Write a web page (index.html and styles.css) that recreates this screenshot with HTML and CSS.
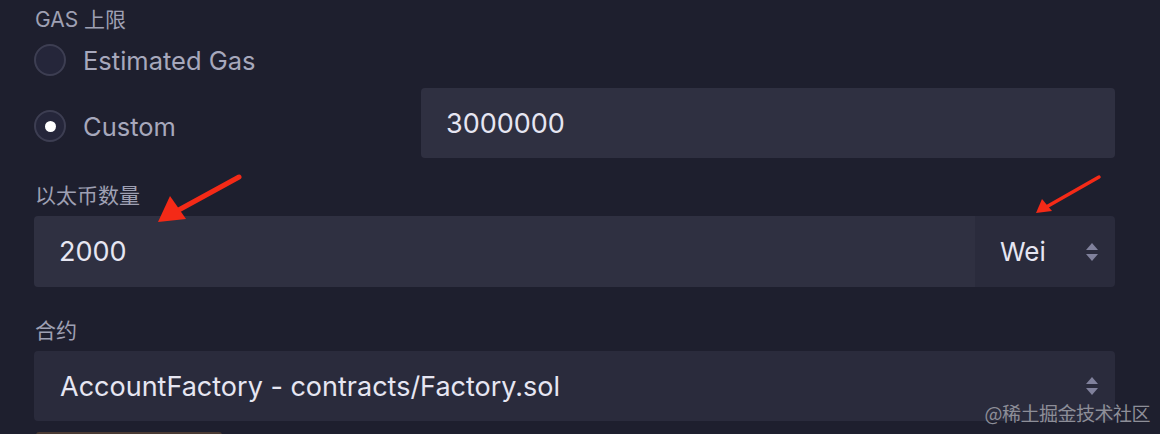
FILE: index.html
```html
<!DOCTYPE html>
<html lang="zh">
<head>
<meta charset="utf-8">
<title>Deploy</title>
<link rel="stylesheet" href="styles.css">
</head>
<body>
<div class="panel">
  <div class="label label-gas">GAS 上限</div>
  <div class="radio-row first">
    <span class="radio"></span>
    <span class="radio-text">Estimated Gas</span>
  </div>
  <div class="radio-row second">
    <div class="radio-item">
      <span class="radio checked"></span>
      <span class="radio-text">Custom</span>
    </div>
    <div class="input gas-input">3000000</div>
  </div>

  <div class="label label-eth">以太币数量</div>
  <div class="amount-row">
    <div class="input amount-input">2000</div>
    <div class="select unit-select">
      <span>Wei</span>
      <svg class="updown" width="14" height="20" viewBox="0 0 14 20"><path d="M7 1 L13 8 L1 8 Z" fill="#80819c"/><path d="M1 12 L13 12 L7 19 Z" fill="#80819c"/></svg>
    </div>
  </div>

  <div class="label label-contract">合约</div>
  <div class="select contract-select">
    <span>AccountFactory - contracts/Factory.sol</span>
    <svg class="updown" width="14" height="20" viewBox="0 0 14 20"><path d="M7 1 L13 8 L1 8 Z" fill="#80819c"/><path d="M1 12 L13 12 L7 19 Z" fill="#80819c"/></svg>
  </div>
  <div class="deploy-btn"></div>
</div>

<svg class="arrows" width="1160" height="434" viewBox="0 0 1160 434">
  <line x1="239" y1="177" x2="175" y2="212" stroke="#f42a17" stroke-width="5" stroke-linecap="round"/>
  <path d="M158 222 L170 196 L177 206 L186 219 Z" fill="#f42a17"/>
  <line x1="1099" y1="177" x2="1048" y2="206" stroke="#f42a17" stroke-width="3.5" stroke-linecap="round"/>
  <path d="M1036 213 L1042 199 L1047 205 L1052 211 Z" fill="#f42a17"/>
</svg>

<div class="watermark">@稀土掘金技术社区</div>
</body>
</html>
```

FILE: styles.css
```css
html, body {
  margin: 0;
  padding: 0;
  background: #1e1f2e;
  width: 1160px;
  height: 434px;
  overflow: hidden;
  font-family: Inter, "Noto Sans", "Noto Sans CJK SC", sans-serif;
}

.panel {
  padding: 0 45px 0 34px;
  display: flex;
  flex-direction: column;
}

.label {
  font-size: 21px;
  line-height: 24px;
  color: #9fa0b3;
  padding-left: 1px;
}

.label-gas { margin-top: 8px; }
.label-eth { margin-top: 26px; margin-bottom: 8px; }
.label-contract { margin-top: 32px; margin-bottom: 8px; }

.radio-row {
  display: flex;
  align-items: center;
}

.radio-row.first {
  height: 40px;
  margin-top: 8px;
}

.radio-row.second {
  margin-top: 8px;
  height: 70px;
}

.radio-item {
  display: flex;
  align-items: center;
  width: 387px;
  margin-top: 6px;
}

.radio {
  box-sizing: border-box;
  width: 32px;
  height: 32px;
  border-radius: 50%;
  border: 2px solid #3d3e52;
  background: #25263a;
  display: flex;
  align-items: center;
  justify-content: center;
  flex-shrink: 0;
}

.radio.checked::after {
  content: "";
  width: 11px;
  height: 11px;
  border-radius: 50%;
  background: #ffffff;
}

.radio-text {
  margin-left: 17px;
  font-size: 25.5px;
  color: #a7a8bc;
}

.input {
  box-sizing: border-box;
  height: 70px;
  background: #2f3041;
  border-radius: 4px;
  color: #e6e6f2;
  font-size: 27px;
  display: flex;
  align-items: center;
}

.gas-input {
  flex: 1;
  padding-left: 25px;
}

.amount-row {
  display: flex;
  height: 71px;
}

.amount-input {
  flex: 1;
  height: 71px;
  padding-left: 25px;
  border-radius: 4px 0 0 4px;
}

.select {
  box-sizing: border-box;
  background: #2a2b3c;
  color: #e6e6f2;
  font-size: 27px;
  display: flex;
  align-items: center;
  justify-content: space-between;
}

.unit-select {
  width: 140px;
  padding: 0 16px 0 25px;
  border-radius: 0 4px 4px 0;
  font-size: 26px;
}

.contract-select {
  height: 70px;
  padding: 0 16px 0 26px;
  border-radius: 4px;
}

.updown {
  display: block;
}

.deploy-btn {
  width: 186px;
  height: 10px;
  margin-top: 11px;
  margin-left: 2px;
  background: #4a3a33;
  border-radius: 3px 3px 0 0;
}

.arrows {
  position: absolute;
  left: 0;
  top: 0;
  pointer-events: none;
}

.watermark {
  position: absolute;
  right: 10px;
  top: 400px;
  font-size: 19px;
  line-height: 26px;
  color: #8d8e98;
  font-family: "Noto Sans CJK SC", sans-serif;
  letter-spacing: -0.5px;
}
```
